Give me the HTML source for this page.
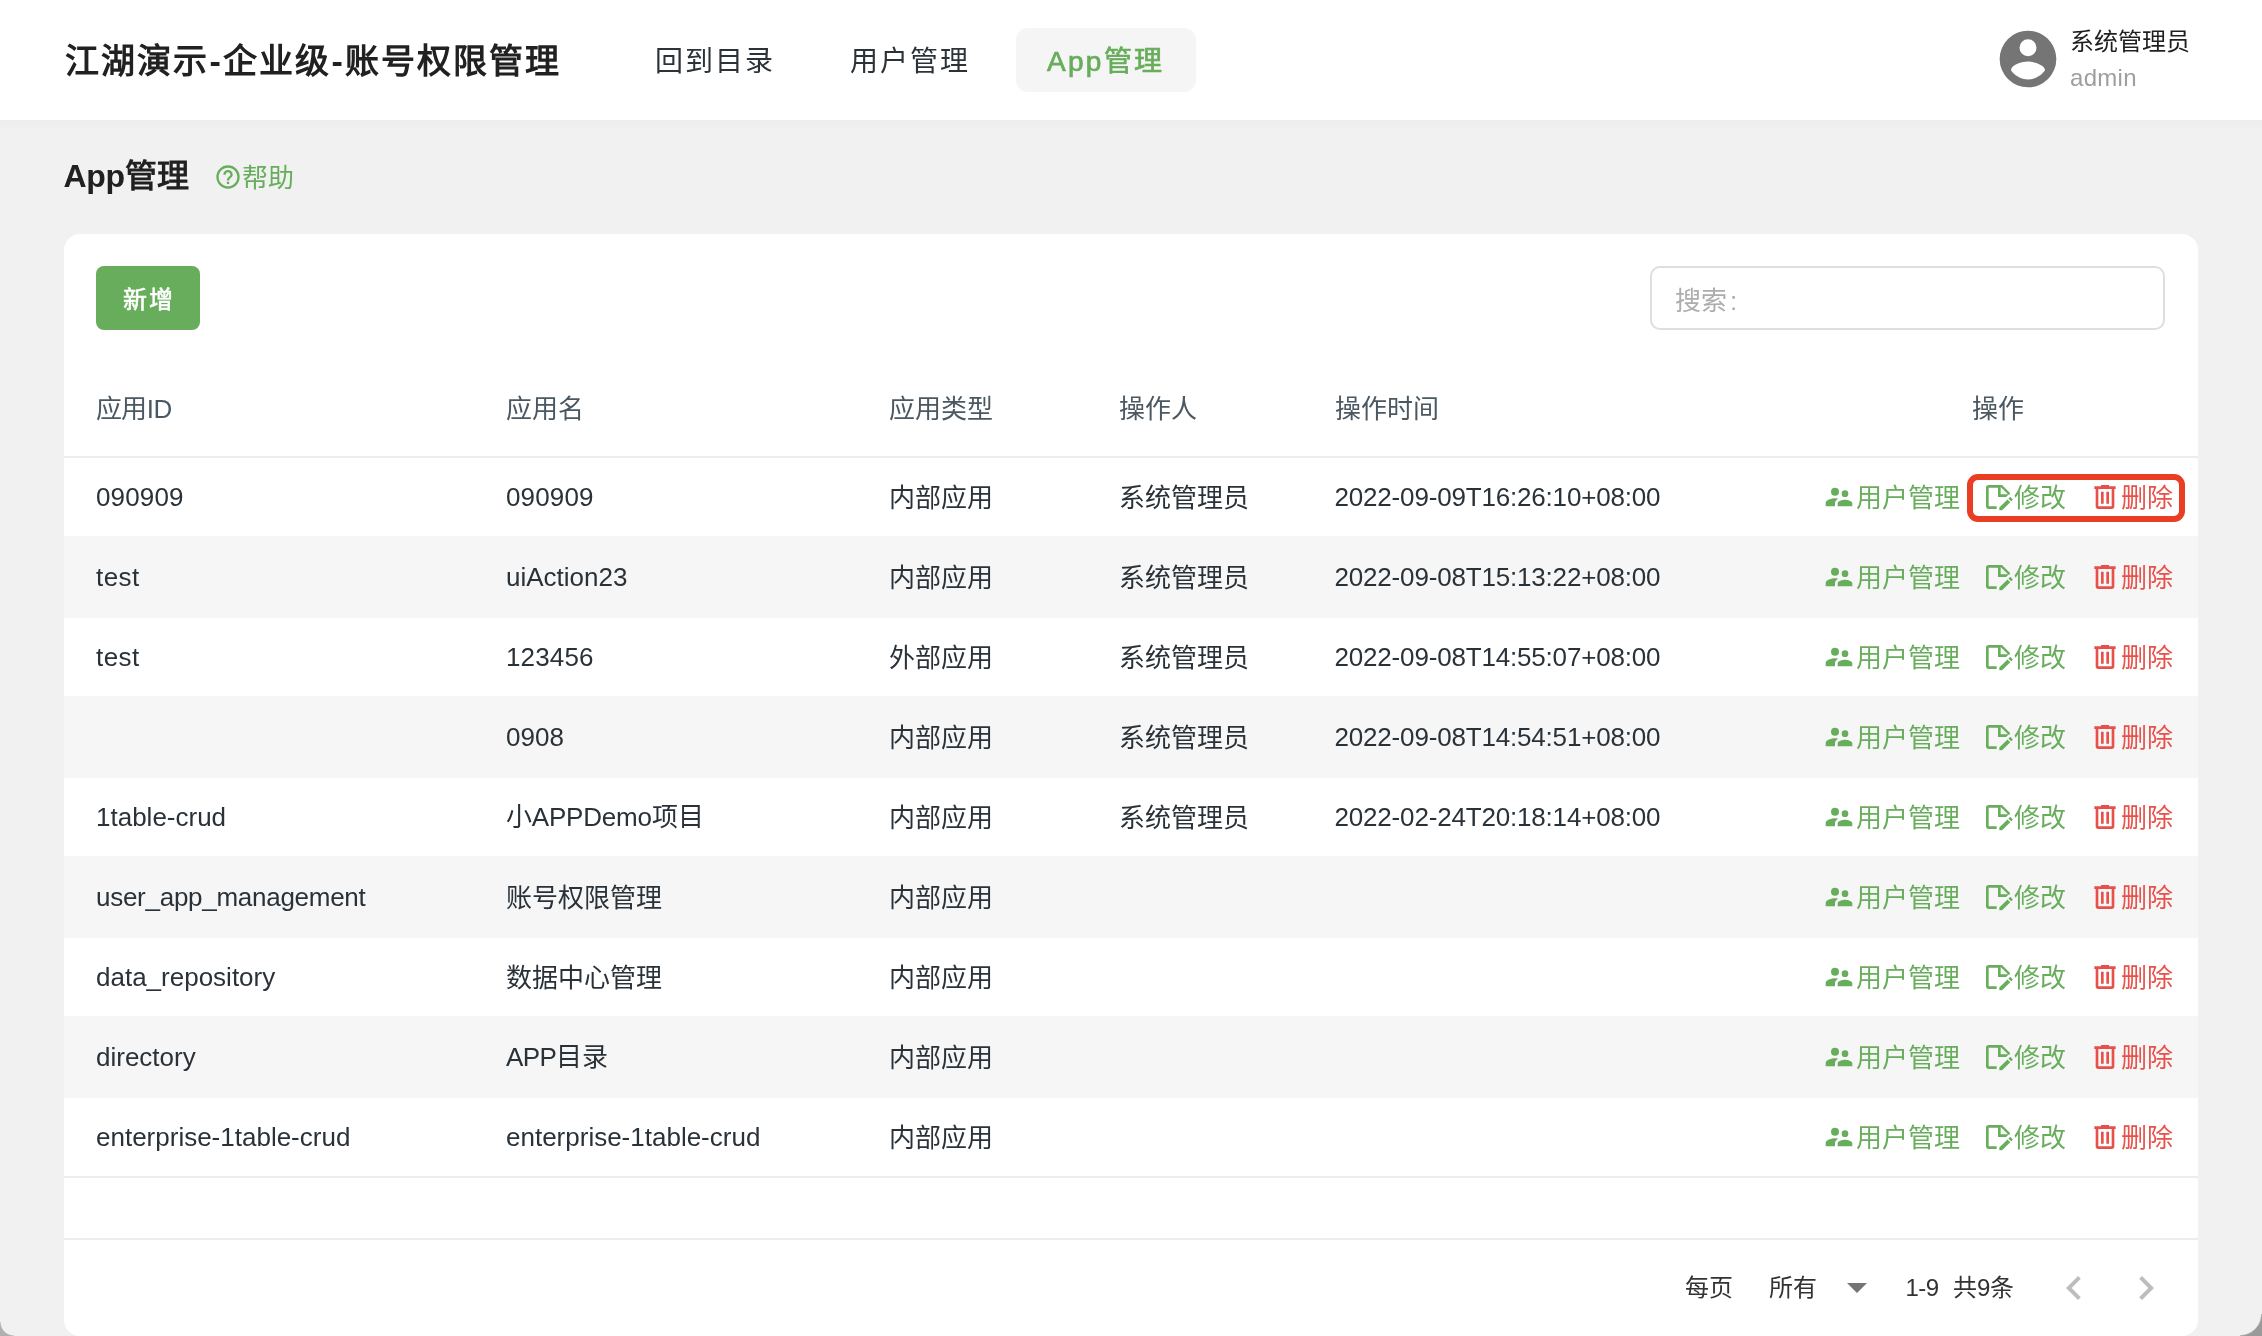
<!DOCTYPE html>
<html lang="zh-CN"><head><meta charset="utf-8"><title>App管理</title>
<style>
html,body{margin:0;padding:0}
body{width:2262px;height:1336px;overflow:hidden;position:relative;background:#f1f1f1;font-family:"Liberation Sans",sans-serif;color:#2a3239}
.t{position:absolute;white-space:nowrap;line-height:1}
.i{position:absolute;display:block}
.hdr{position:absolute;left:0;top:0;width:2262px;height:120px;background:#fff}
.shade{position:absolute;left:0;top:120px;width:2262px;height:10px;background:linear-gradient(#ededed,#f1f1f1)}
.title{font-size:34px;letter-spacing:2px;font-weight:700;color:#212121}.title span{padding:0 0.4px}
.nav{font-size:28px;letter-spacing:2.1px;color:#2b3338}
.pill{position:absolute;left:1016px;top:28px;width:180px;height:64px;border-radius:12px;background:#f5f5f5}
.card{position:absolute;left:64px;top:234px;width:2134px;height:1102px;border-radius:16px;background:#fff;overflow:hidden}
.btn{position:absolute;left:32px;top:32px;width:104px;height:64px;border-radius:8px;background:#67ad5b}
.search{position:absolute;left:1586px;top:32px;width:511px;height:60px;border:2px solid #dedede;border-radius:10px}
.c{font-size:26px}
.h{font-size:26px;color:#4b5862}
.g{color:#67ad5b}.r{color:#e8504a}
.ln{position:absolute;left:0;width:2134px;height:2px;background:#ededed}
.stripe{position:absolute;left:0;width:2134px;height:82px;background:#f6f6f6}
.f{font-size:24px;color:#333}
</style></head><body>
<div id="w" style="position:absolute;left:0;top:0;width:2262px;height:1336px;will-change:transform">
<div class="hdr"></div><div class="shade"></div>
<div class="t title" style="left:65px;top:43.5px;">江湖演示<span>-</span>企业级<span>-</span>账号权限管理</div>
<div class="t nav" style="left:654.5px;top:47.5px;">回到目录</div>
<div class="t nav" style="left:849.5px;top:47.5px;">用户管理</div>
<div class="pill"></div>
<div class="t nav" style="left:1047px;top:47.5px;color:#67ad5b;letter-spacing:2.3px;-webkit-text-stroke:0.7px #67ad5b">App管理</div>
<svg class="i" style="left:1994px;top:25.4px" width="68" height="68" viewBox="0 0 24 24"><path fill="#757575" d="M12,19.2C9.5,19.2 7.29,17.92 6,16C6.03,14 10,12.9 12,12.9C14,12.9 17.97,14 18,16C16.71,17.92 14.5,19.2 12,19.2M12,5A3,3 0 0,1 15,8A3,3 0 0,1 12,11A3,3 0 0,1 9,8A3,3 0 0,1 12,5M12,2A10,10 0 0,0 2,12A10,10 0 0,0 12,22A10,10 0 0,0 22,12C22,6.47 17.5,2 12,2Z"/></svg>
<div class="t " style="left:2070px;top:30px;font-size:24px;color:#1f1f1f">系统管理员</div>
<div class="t " style="left:2070px;top:65.5px;font-size:24px;color:#9e9e9e;letter-spacing:0.3px">admin</div>
<div class="t " style="left:63.5px;top:160px;font-size:32px;font-weight:700;color:#212121;letter-spacing:-0.3px">App管理</div>
<svg class="i" style="left:214px;top:163px" width="28" height="28" viewBox="0 0 24 24"><path fill="#67ad5b" d="M11,18H13V16H11V18M12,2A10,10 0 0,0 2,12A10,10 0 0,0 12,22A10,10 0 0,0 22,12A10,10 0 0,0 12,2M12,20C7.59,20 4,16.41 4,12C4,7.59 7.59,4 12,4C16.41,4 20,7.59 20,12C20,16.41 16.41,20 12,20M12,6A4,4 0 0,0 8,10H10A2,2 0 0,1 12,8A2,2 0 0,1 14,10C14,12 11,11.75 11,15H13C13,12.75 16,12.5 16,10A4,4 0 0,0 12,6Z"/></svg>
<div class="t g" style="left:242px;top:165px;font-size:26px">帮助</div>
<div class="card">
<div class="btn"></div>
<div class="t " style="left:59px;top:53.5px;font-size:24px;letter-spacing:2.14px;color:#fff;-webkit-text-stroke:0.6px #fff">新增</div>
<div class="search"></div>
<div class="t " style="left:1611px;top:53.5px;font-size:26px;color:#adadad">搜索<span style="margin-left:3px">:</span></div>
<div class="t h" style="left:32px;top:162px;letter-spacing:-0.6px">应用ID</div>
<div class="t h" style="left:442px;top:162px;">应用名</div>
<div class="t h" style="left:825px;top:162px;">应用类型</div>
<div class="t h" style="left:1055px;top:162px;">操作人</div>
<div class="t h" style="left:1271px;top:162px;">操作时间</div>
<div class="t h" style="left:1907.5px;top:162px;">操作</div>
<div class="ln" style="top:222px"></div>
<div class="stripe" style="top:302px"></div>
<div class="stripe" style="top:462px"></div>
<div class="stripe" style="top:622px"></div>
<div class="stripe" style="top:782px"></div>
<div class="t c" style="left:32px;top:250px;letter-spacing:0.15px">090909</div>
<div class="t c" style="left:442px;top:250px;letter-spacing:0.15px">090909</div>
<div class="t c" style="left:825px;top:251px;">内部应用</div>
<div class="t c" style="left:1055px;top:251px;">系统管理员</div>
<div class="t c" style="left:1270.5px;top:250px;letter-spacing:-0.18px">2022-09-09T16:26:10+08:00</div>
<svg class="i" style="left:1759.3px;top:247px" width="32" height="32" viewBox="0 0 24 24"><path fill="#67ad5b" d="M16.5,12A2.5,2.5 0 0,0 19,9.5A2.5,2.5 0 0,0 16.5,7A2.5,2.5 0 0,0 14,9.5A2.5,2.5 0 0,0 16.5,12M9,11A3,3 0 0,0 12,8A3,3 0 0,0 9,5A3,3 0 0,0 6,8A3,3 0 0,0 9,11M16.5,14C14.67,14 11,14.92 11,16.75V19H22V16.75C22,14.92 18.33,14 16.5,14M9,13C6.67,13 2,14.17 2,16.5V19H9V16.75C9,15.9 9.33,14.41 11.37,13.28C10.5,13.1 9.66,13 9,13Z"/></svg>
<div class="t c g" style="left:1792px;top:251px;">用户管理</div>
<svg class="i" style="left:1918px;top:247px" width="32" height="32" viewBox="0 0 24 24"><path fill="#67ad5b" d="M18.13 12L19.39 10.74C19.83 10.3 20.39 10.06 21 10V9L15 3H5C3.89 3 3 3.89 3 5V19C3 20.1 3.89 21 5 21H11V19.13L11.13 19H5V5H12V12H18.13M14 4.5L19.5 10H14V4.5M19.13 13.83L21.17 15.87L15.04 22H13V19.96L19.13 13.83M22.85 14.19L21.87 15.17L19.83 13.13L20.81 12.15C21 11.95 21.33 11.95 21.53 12.15L22.85 13.47C23.05 13.67 23.05 14 22.85 14.19Z"/></svg>
<div class="t c g" style="left:1950px;top:251px;">修改</div>
<svg class="i" style="left:2025px;top:247px" width="32" height="32" viewBox="0 0 24 24"><path fill="#e8504a" d="M9,3V4H4V6H5V19A2,2 0 0,0 7,21H17A2,2 0 0,0 19,19V6H20V4H15V3H9M7,6H17V19H7V6M9,8V17H11V8H9M13,8V17H15V8H13Z"/></svg>
<div class="t c r" style="left:2057px;top:251px;">删除</div>
<div class="t c" style="left:32px;top:330px;letter-spacing:0.45px">test</div>
<div class="t c" style="left:442px;top:330px;">uiAction23</div>
<div class="t c" style="left:825px;top:331px;">内部应用</div>
<div class="t c" style="left:1055px;top:331px;">系统管理员</div>
<div class="t c" style="left:1270.5px;top:330px;letter-spacing:-0.18px">2022-09-08T15:13:22+08:00</div>
<svg class="i" style="left:1759.3px;top:327px" width="32" height="32" viewBox="0 0 24 24"><path fill="#67ad5b" d="M16.5,12A2.5,2.5 0 0,0 19,9.5A2.5,2.5 0 0,0 16.5,7A2.5,2.5 0 0,0 14,9.5A2.5,2.5 0 0,0 16.5,12M9,11A3,3 0 0,0 12,8A3,3 0 0,0 9,5A3,3 0 0,0 6,8A3,3 0 0,0 9,11M16.5,14C14.67,14 11,14.92 11,16.75V19H22V16.75C22,14.92 18.33,14 16.5,14M9,13C6.67,13 2,14.17 2,16.5V19H9V16.75C9,15.9 9.33,14.41 11.37,13.28C10.5,13.1 9.66,13 9,13Z"/></svg>
<div class="t c g" style="left:1792px;top:331px;">用户管理</div>
<svg class="i" style="left:1918px;top:327px" width="32" height="32" viewBox="0 0 24 24"><path fill="#67ad5b" d="M18.13 12L19.39 10.74C19.83 10.3 20.39 10.06 21 10V9L15 3H5C3.89 3 3 3.89 3 5V19C3 20.1 3.89 21 5 21H11V19.13L11.13 19H5V5H12V12H18.13M14 4.5L19.5 10H14V4.5M19.13 13.83L21.17 15.87L15.04 22H13V19.96L19.13 13.83M22.85 14.19L21.87 15.17L19.83 13.13L20.81 12.15C21 11.95 21.33 11.95 21.53 12.15L22.85 13.47C23.05 13.67 23.05 14 22.85 14.19Z"/></svg>
<div class="t c g" style="left:1950px;top:331px;">修改</div>
<svg class="i" style="left:2025px;top:327px" width="32" height="32" viewBox="0 0 24 24"><path fill="#e8504a" d="M9,3V4H4V6H5V19A2,2 0 0,0 7,21H17A2,2 0 0,0 19,19V6H20V4H15V3H9M7,6H17V19H7V6M9,8V17H11V8H9M13,8V17H15V8H13Z"/></svg>
<div class="t c r" style="left:2057px;top:331px;">删除</div>
<div class="t c" style="left:32px;top:410px;letter-spacing:0.45px">test</div>
<div class="t c" style="left:442px;top:410px;letter-spacing:0.15px">123456</div>
<div class="t c" style="left:825px;top:411px;">外部应用</div>
<div class="t c" style="left:1055px;top:411px;">系统管理员</div>
<div class="t c" style="left:1270.5px;top:410px;letter-spacing:-0.18px">2022-09-08T14:55:07+08:00</div>
<svg class="i" style="left:1759.3px;top:407px" width="32" height="32" viewBox="0 0 24 24"><path fill="#67ad5b" d="M16.5,12A2.5,2.5 0 0,0 19,9.5A2.5,2.5 0 0,0 16.5,7A2.5,2.5 0 0,0 14,9.5A2.5,2.5 0 0,0 16.5,12M9,11A3,3 0 0,0 12,8A3,3 0 0,0 9,5A3,3 0 0,0 6,8A3,3 0 0,0 9,11M16.5,14C14.67,14 11,14.92 11,16.75V19H22V16.75C22,14.92 18.33,14 16.5,14M9,13C6.67,13 2,14.17 2,16.5V19H9V16.75C9,15.9 9.33,14.41 11.37,13.28C10.5,13.1 9.66,13 9,13Z"/></svg>
<div class="t c g" style="left:1792px;top:411px;">用户管理</div>
<svg class="i" style="left:1918px;top:407px" width="32" height="32" viewBox="0 0 24 24"><path fill="#67ad5b" d="M18.13 12L19.39 10.74C19.83 10.3 20.39 10.06 21 10V9L15 3H5C3.89 3 3 3.89 3 5V19C3 20.1 3.89 21 5 21H11V19.13L11.13 19H5V5H12V12H18.13M14 4.5L19.5 10H14V4.5M19.13 13.83L21.17 15.87L15.04 22H13V19.96L19.13 13.83M22.85 14.19L21.87 15.17L19.83 13.13L20.81 12.15C21 11.95 21.33 11.95 21.53 12.15L22.85 13.47C23.05 13.67 23.05 14 22.85 14.19Z"/></svg>
<div class="t c g" style="left:1950px;top:411px;">修改</div>
<svg class="i" style="left:2025px;top:407px" width="32" height="32" viewBox="0 0 24 24"><path fill="#e8504a" d="M9,3V4H4V6H5V19A2,2 0 0,0 7,21H17A2,2 0 0,0 19,19V6H20V4H15V3H9M7,6H17V19H7V6M9,8V17H11V8H9M13,8V17H15V8H13Z"/></svg>
<div class="t c r" style="left:2057px;top:411px;">删除</div>
<div class="t c" style="left:442px;top:490px;">0908</div>
<div class="t c" style="left:825px;top:491px;">内部应用</div>
<div class="t c" style="left:1055px;top:491px;">系统管理员</div>
<div class="t c" style="left:1270.5px;top:490px;letter-spacing:-0.18px">2022-09-08T14:54:51+08:00</div>
<svg class="i" style="left:1759.3px;top:487px" width="32" height="32" viewBox="0 0 24 24"><path fill="#67ad5b" d="M16.5,12A2.5,2.5 0 0,0 19,9.5A2.5,2.5 0 0,0 16.5,7A2.5,2.5 0 0,0 14,9.5A2.5,2.5 0 0,0 16.5,12M9,11A3,3 0 0,0 12,8A3,3 0 0,0 9,5A3,3 0 0,0 6,8A3,3 0 0,0 9,11M16.5,14C14.67,14 11,14.92 11,16.75V19H22V16.75C22,14.92 18.33,14 16.5,14M9,13C6.67,13 2,14.17 2,16.5V19H9V16.75C9,15.9 9.33,14.41 11.37,13.28C10.5,13.1 9.66,13 9,13Z"/></svg>
<div class="t c g" style="left:1792px;top:491px;">用户管理</div>
<svg class="i" style="left:1918px;top:487px" width="32" height="32" viewBox="0 0 24 24"><path fill="#67ad5b" d="M18.13 12L19.39 10.74C19.83 10.3 20.39 10.06 21 10V9L15 3H5C3.89 3 3 3.89 3 5V19C3 20.1 3.89 21 5 21H11V19.13L11.13 19H5V5H12V12H18.13M14 4.5L19.5 10H14V4.5M19.13 13.83L21.17 15.87L15.04 22H13V19.96L19.13 13.83M22.85 14.19L21.87 15.17L19.83 13.13L20.81 12.15C21 11.95 21.33 11.95 21.53 12.15L22.85 13.47C23.05 13.67 23.05 14 22.85 14.19Z"/></svg>
<div class="t c g" style="left:1950px;top:491px;">修改</div>
<svg class="i" style="left:2025px;top:487px" width="32" height="32" viewBox="0 0 24 24"><path fill="#e8504a" d="M9,3V4H4V6H5V19A2,2 0 0,0 7,21H17A2,2 0 0,0 19,19V6H20V4H15V3H9M7,6H17V19H7V6M9,8V17H11V8H9M13,8V17H15V8H13Z"/></svg>
<div class="t c r" style="left:2057px;top:491px;">删除</div>
<div class="t c" style="left:32px;top:570px;">1table-crud</div>
<div class="t c" style="left:442px;top:570px;letter-spacing:-0.2px">小APPDemo项目</div>
<div class="t c" style="left:825px;top:571px;">内部应用</div>
<div class="t c" style="left:1055px;top:571px;">系统管理员</div>
<div class="t c" style="left:1270.5px;top:570px;letter-spacing:-0.18px">2022-02-24T20:18:14+08:00</div>
<svg class="i" style="left:1759.3px;top:567px" width="32" height="32" viewBox="0 0 24 24"><path fill="#67ad5b" d="M16.5,12A2.5,2.5 0 0,0 19,9.5A2.5,2.5 0 0,0 16.5,7A2.5,2.5 0 0,0 14,9.5A2.5,2.5 0 0,0 16.5,12M9,11A3,3 0 0,0 12,8A3,3 0 0,0 9,5A3,3 0 0,0 6,8A3,3 0 0,0 9,11M16.5,14C14.67,14 11,14.92 11,16.75V19H22V16.75C22,14.92 18.33,14 16.5,14M9,13C6.67,13 2,14.17 2,16.5V19H9V16.75C9,15.9 9.33,14.41 11.37,13.28C10.5,13.1 9.66,13 9,13Z"/></svg>
<div class="t c g" style="left:1792px;top:571px;">用户管理</div>
<svg class="i" style="left:1918px;top:567px" width="32" height="32" viewBox="0 0 24 24"><path fill="#67ad5b" d="M18.13 12L19.39 10.74C19.83 10.3 20.39 10.06 21 10V9L15 3H5C3.89 3 3 3.89 3 5V19C3 20.1 3.89 21 5 21H11V19.13L11.13 19H5V5H12V12H18.13M14 4.5L19.5 10H14V4.5M19.13 13.83L21.17 15.87L15.04 22H13V19.96L19.13 13.83M22.85 14.19L21.87 15.17L19.83 13.13L20.81 12.15C21 11.95 21.33 11.95 21.53 12.15L22.85 13.47C23.05 13.67 23.05 14 22.85 14.19Z"/></svg>
<div class="t c g" style="left:1950px;top:571px;">修改</div>
<svg class="i" style="left:2025px;top:567px" width="32" height="32" viewBox="0 0 24 24"><path fill="#e8504a" d="M9,3V4H4V6H5V19A2,2 0 0,0 7,21H17A2,2 0 0,0 19,19V6H20V4H15V3H9M7,6H17V19H7V6M9,8V17H11V8H9M13,8V17H15V8H13Z"/></svg>
<div class="t c r" style="left:2057px;top:571px;">删除</div>
<div class="t c" style="left:32px;top:650px;letter-spacing:-0.27px">user_app_management</div>
<div class="t c" style="left:442px;top:651px;">账号权限管理</div>
<div class="t c" style="left:825px;top:651px;">内部应用</div>
<svg class="i" style="left:1759.3px;top:647px" width="32" height="32" viewBox="0 0 24 24"><path fill="#67ad5b" d="M16.5,12A2.5,2.5 0 0,0 19,9.5A2.5,2.5 0 0,0 16.5,7A2.5,2.5 0 0,0 14,9.5A2.5,2.5 0 0,0 16.5,12M9,11A3,3 0 0,0 12,8A3,3 0 0,0 9,5A3,3 0 0,0 6,8A3,3 0 0,0 9,11M16.5,14C14.67,14 11,14.92 11,16.75V19H22V16.75C22,14.92 18.33,14 16.5,14M9,13C6.67,13 2,14.17 2,16.5V19H9V16.75C9,15.9 9.33,14.41 11.37,13.28C10.5,13.1 9.66,13 9,13Z"/></svg>
<div class="t c g" style="left:1792px;top:651px;">用户管理</div>
<svg class="i" style="left:1918px;top:647px" width="32" height="32" viewBox="0 0 24 24"><path fill="#67ad5b" d="M18.13 12L19.39 10.74C19.83 10.3 20.39 10.06 21 10V9L15 3H5C3.89 3 3 3.89 3 5V19C3 20.1 3.89 21 5 21H11V19.13L11.13 19H5V5H12V12H18.13M14 4.5L19.5 10H14V4.5M19.13 13.83L21.17 15.87L15.04 22H13V19.96L19.13 13.83M22.85 14.19L21.87 15.17L19.83 13.13L20.81 12.15C21 11.95 21.33 11.95 21.53 12.15L22.85 13.47C23.05 13.67 23.05 14 22.85 14.19Z"/></svg>
<div class="t c g" style="left:1950px;top:651px;">修改</div>
<svg class="i" style="left:2025px;top:647px" width="32" height="32" viewBox="0 0 24 24"><path fill="#e8504a" d="M9,3V4H4V6H5V19A2,2 0 0,0 7,21H17A2,2 0 0,0 19,19V6H20V4H15V3H9M7,6H17V19H7V6M9,8V17H11V8H9M13,8V17H15V8H13Z"/></svg>
<div class="t c r" style="left:2057px;top:651px;">删除</div>
<div class="t c" style="left:32px;top:730px;">data_repository</div>
<div class="t c" style="left:442px;top:731px;">数据中心管理</div>
<div class="t c" style="left:825px;top:731px;">内部应用</div>
<svg class="i" style="left:1759.3px;top:727px" width="32" height="32" viewBox="0 0 24 24"><path fill="#67ad5b" d="M16.5,12A2.5,2.5 0 0,0 19,9.5A2.5,2.5 0 0,0 16.5,7A2.5,2.5 0 0,0 14,9.5A2.5,2.5 0 0,0 16.5,12M9,11A3,3 0 0,0 12,8A3,3 0 0,0 9,5A3,3 0 0,0 6,8A3,3 0 0,0 9,11M16.5,14C14.67,14 11,14.92 11,16.75V19H22V16.75C22,14.92 18.33,14 16.5,14M9,13C6.67,13 2,14.17 2,16.5V19H9V16.75C9,15.9 9.33,14.41 11.37,13.28C10.5,13.1 9.66,13 9,13Z"/></svg>
<div class="t c g" style="left:1792px;top:731px;">用户管理</div>
<svg class="i" style="left:1918px;top:727px" width="32" height="32" viewBox="0 0 24 24"><path fill="#67ad5b" d="M18.13 12L19.39 10.74C19.83 10.3 20.39 10.06 21 10V9L15 3H5C3.89 3 3 3.89 3 5V19C3 20.1 3.89 21 5 21H11V19.13L11.13 19H5V5H12V12H18.13M14 4.5L19.5 10H14V4.5M19.13 13.83L21.17 15.87L15.04 22H13V19.96L19.13 13.83M22.85 14.19L21.87 15.17L19.83 13.13L20.81 12.15C21 11.95 21.33 11.95 21.53 12.15L22.85 13.47C23.05 13.67 23.05 14 22.85 14.19Z"/></svg>
<div class="t c g" style="left:1950px;top:731px;">修改</div>
<svg class="i" style="left:2025px;top:727px" width="32" height="32" viewBox="0 0 24 24"><path fill="#e8504a" d="M9,3V4H4V6H5V19A2,2 0 0,0 7,21H17A2,2 0 0,0 19,19V6H20V4H15V3H9M7,6H17V19H7V6M9,8V17H11V8H9M13,8V17H15V8H13Z"/></svg>
<div class="t c r" style="left:2057px;top:731px;">删除</div>
<div class="t c" style="left:32px;top:810px;">directory</div>
<div class="t c" style="left:442px;top:810px;letter-spacing:-0.6px">APP目录</div>
<div class="t c" style="left:825px;top:811px;">内部应用</div>
<svg class="i" style="left:1759.3px;top:807px" width="32" height="32" viewBox="0 0 24 24"><path fill="#67ad5b" d="M16.5,12A2.5,2.5 0 0,0 19,9.5A2.5,2.5 0 0,0 16.5,7A2.5,2.5 0 0,0 14,9.5A2.5,2.5 0 0,0 16.5,12M9,11A3,3 0 0,0 12,8A3,3 0 0,0 9,5A3,3 0 0,0 6,8A3,3 0 0,0 9,11M16.5,14C14.67,14 11,14.92 11,16.75V19H22V16.75C22,14.92 18.33,14 16.5,14M9,13C6.67,13 2,14.17 2,16.5V19H9V16.75C9,15.9 9.33,14.41 11.37,13.28C10.5,13.1 9.66,13 9,13Z"/></svg>
<div class="t c g" style="left:1792px;top:811px;">用户管理</div>
<svg class="i" style="left:1918px;top:807px" width="32" height="32" viewBox="0 0 24 24"><path fill="#67ad5b" d="M18.13 12L19.39 10.74C19.83 10.3 20.39 10.06 21 10V9L15 3H5C3.89 3 3 3.89 3 5V19C3 20.1 3.89 21 5 21H11V19.13L11.13 19H5V5H12V12H18.13M14 4.5L19.5 10H14V4.5M19.13 13.83L21.17 15.87L15.04 22H13V19.96L19.13 13.83M22.85 14.19L21.87 15.17L19.83 13.13L20.81 12.15C21 11.95 21.33 11.95 21.53 12.15L22.85 13.47C23.05 13.67 23.05 14 22.85 14.19Z"/></svg>
<div class="t c g" style="left:1950px;top:811px;">修改</div>
<svg class="i" style="left:2025px;top:807px" width="32" height="32" viewBox="0 0 24 24"><path fill="#e8504a" d="M9,3V4H4V6H5V19A2,2 0 0,0 7,21H17A2,2 0 0,0 19,19V6H20V4H15V3H9M7,6H17V19H7V6M9,8V17H11V8H9M13,8V17H15V8H13Z"/></svg>
<div class="t c r" style="left:2057px;top:811px;">删除</div>
<div class="t c" style="left:32px;top:890px;">enterprise-1table-crud</div>
<div class="t c" style="left:442px;top:890px;">enterprise-1table-crud</div>
<div class="t c" style="left:825px;top:891px;">内部应用</div>
<svg class="i" style="left:1759.3px;top:887px" width="32" height="32" viewBox="0 0 24 24"><path fill="#67ad5b" d="M16.5,12A2.5,2.5 0 0,0 19,9.5A2.5,2.5 0 0,0 16.5,7A2.5,2.5 0 0,0 14,9.5A2.5,2.5 0 0,0 16.5,12M9,11A3,3 0 0,0 12,8A3,3 0 0,0 9,5A3,3 0 0,0 6,8A3,3 0 0,0 9,11M16.5,14C14.67,14 11,14.92 11,16.75V19H22V16.75C22,14.92 18.33,14 16.5,14M9,13C6.67,13 2,14.17 2,16.5V19H9V16.75C9,15.9 9.33,14.41 11.37,13.28C10.5,13.1 9.66,13 9,13Z"/></svg>
<div class="t c g" style="left:1792px;top:891px;">用户管理</div>
<svg class="i" style="left:1918px;top:887px" width="32" height="32" viewBox="0 0 24 24"><path fill="#67ad5b" d="M18.13 12L19.39 10.74C19.83 10.3 20.39 10.06 21 10V9L15 3H5C3.89 3 3 3.89 3 5V19C3 20.1 3.89 21 5 21H11V19.13L11.13 19H5V5H12V12H18.13M14 4.5L19.5 10H14V4.5M19.13 13.83L21.17 15.87L15.04 22H13V19.96L19.13 13.83M22.85 14.19L21.87 15.17L19.83 13.13L20.81 12.15C21 11.95 21.33 11.95 21.53 12.15L22.85 13.47C23.05 13.67 23.05 14 22.85 14.19Z"/></svg>
<div class="t c g" style="left:1950px;top:891px;">修改</div>
<svg class="i" style="left:2025px;top:887px" width="32" height="32" viewBox="0 0 24 24"><path fill="#e8504a" d="M9,3V4H4V6H5V19A2,2 0 0,0 7,21H17A2,2 0 0,0 19,19V6H20V4H15V3H9M7,6H17V19H7V6M9,8V17H11V8H9M13,8V17H15V8H13Z"/></svg>
<div class="t c r" style="left:2057px;top:891px;">删除</div>
<div class="ln" style="top:942px"></div>
<div class="ln" style="top:1004px"></div>
<div class="t f" style="left:1621px;top:1042px;">每页</div>
<div class="t f" style="left:1705px;top:1042px;">所有</div>
<svg class="i" style="left:1769px;top:1029px" width="48" height="48" viewBox="0 0 24 24"><path fill="#757575" d="M7,10L12,15L17,10H7Z"/></svg>
<div class="t f" style="left:1841.5px;top:1042px;letter-spacing:-0.5px">1-9</div>
<div class="t f" style="left:1889px;top:1042px;">共9条</div>
<svg class="i" style="left:1985.5px;top:1029.7px" width="48" height="48" viewBox="0 0 24 24"><path fill="#bdbdbd" d="M15.41,16.58L10.83,12L15.41,7.41L14,6L8,12L14,18L15.41,16.58Z"/></svg>
<svg class="i" style="left:2057.5px;top:1029.7px" width="48" height="48" viewBox="0 0 24 24"><path fill="#bdbdbd" d="M8.59,16.58L13.17,12L8.59,7.41L10,6L16,12L10,18L8.59,16.58Z"/></svg>
</div>
<div style="position:absolute;box-sizing:border-box;left:1967px;top:474px;width:217.6px;height:47.8px;border:6px solid #e93d24;border-radius:11px"></div>
<div style="position:absolute;left:2240px;top:1314px;width:22px;height:22px;background:radial-gradient(circle at 0 0,rgba(0,0,0,0) 20.5px,#9a9a9a 22px)"></div>
<div style="position:absolute;left:0;top:1322px;width:14px;height:14px;background:radial-gradient(circle at 100% 0,rgba(0,0,0,0) 13px,#b0b0b0 14px)"></div>
</div></body></html>
